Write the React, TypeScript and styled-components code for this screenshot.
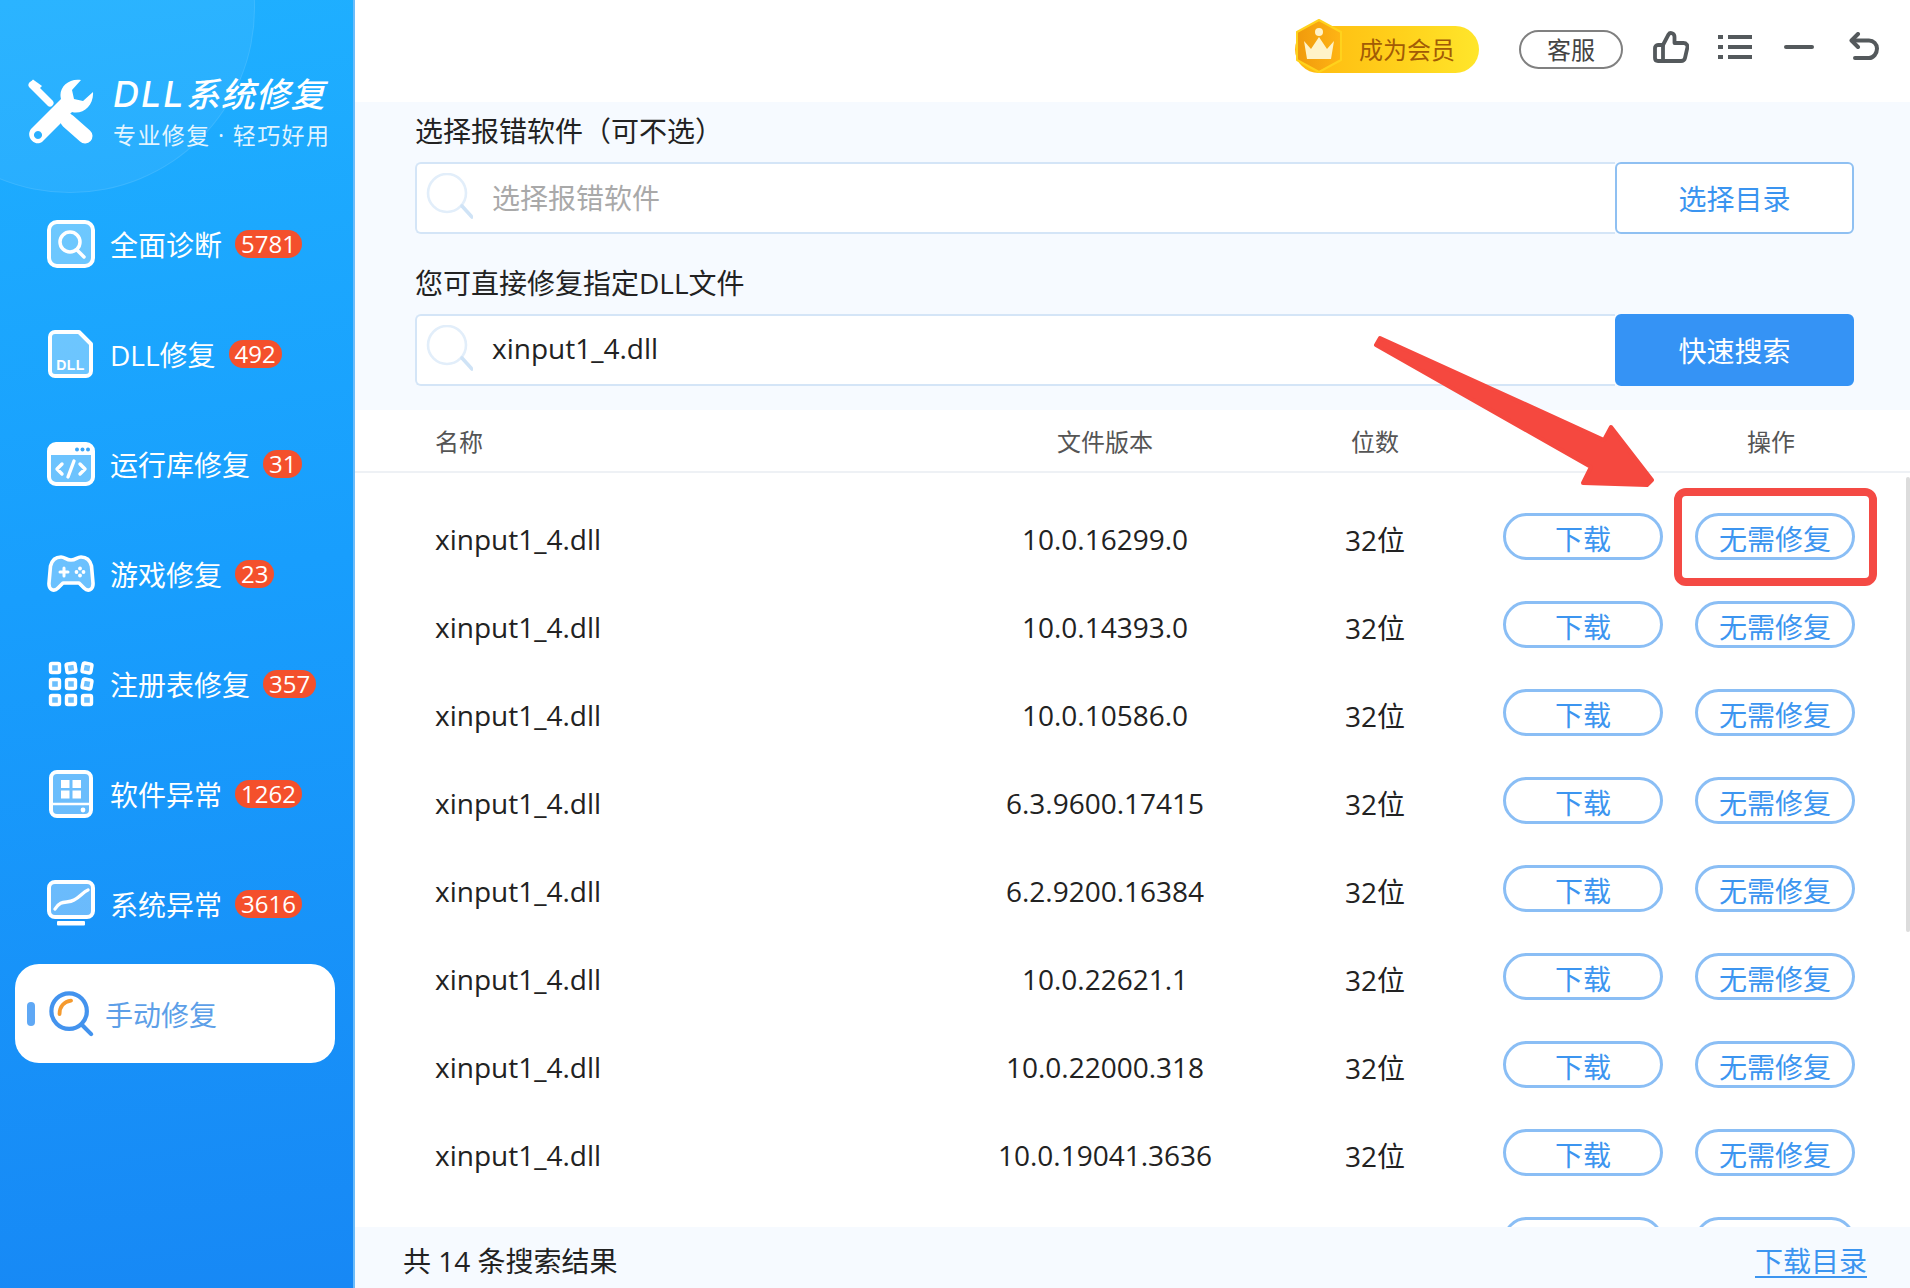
import React from "react";
import styled, { createGlobalStyle } from "styled-components";

const FONT = `"Open Sans", "Noto Sans CJK SC", sans-serif`;

const Global = createGlobalStyle`
  html, body { margin: 0; padding: 0; background: #fff; }
  body { font-family: ${FONT}; }
  * { box-sizing: border-box; }
`;

const App_ = styled.div`
  position: relative;
  display: flex;
  width: 1910px;
  height: 1288px;
  overflow: hidden;
  background: #fff;
`;

/* ---------- sidebar ---------- */
const Sidebar = styled.aside`
  position: relative;
  flex: 0 0 355px;
  display: flex;
  flex-direction: column;
  overflow: hidden;
  background: linear-gradient(172deg, #1fb0ff 0%, #189efd 45%, #1788f5 100%);
  border-right: 2px solid #6cbcfa;
`;
const Halo = styled.div`
  position: absolute;
  left: -115px;
  top: -177px;
  width: 370px;
  height: 370px;
  border-radius: 50%;
  background: rgba(255, 255, 255, 0.055);
  border: 1px solid rgba(255, 255, 255, 0.09);
`;
const Brand = styled.div`
  position: relative;
  height: 194px;
  padding: 75px 0 0 28px;
  display: flex;
  align-items: flex-start;
  gap: 19px;
  color: #fff;
`;
const BrandText = styled.div`
  display: flex;
  flex-direction: column;
`;
const BrandTitle = styled.div`
  font-family: "Inter", "Noto Sans CJK SC", sans-serif;
  font-size: 34px;
  line-height: 38px;
  font-style: italic;
  font-weight: 500;
  letter-spacing: 1px;
  white-space: nowrap;
`;
const BrandLatin = styled.span`
  font-size: 36px;
  letter-spacing: 2px;
`;
const BrandSub = styled.div`
  margin-top: 7px;
  font-size: 23px;
  line-height: 28px;
  letter-spacing: 1.4px;
  color: rgba(255, 255, 255, 0.88);
  white-space: nowrap;
`;
const Nav = styled.nav`
  position: relative;
  display: flex;
  flex-direction: column;
  gap: 10px;
  width: 320px;
  margin-left: 15px;
`;
const NavItem = styled.div<{ $active?: boolean }>`
  height: ${(p) => (p.$active ? "99px" : "100px")};
  display: flex;
  align-items: center;
  padding-left: ${(p) => (p.$active ? "12px" : "32px")};
  gap: ${(p) => (p.$active ? "14px" : "15px")};
  border-radius: 24px;
  background: ${(p) => (p.$active ? "#fff" : "transparent")};
`;
const ActiveBar = styled.span`
  width: 8px;
  height: 24px;
  border-radius: 4px;
  background: #5fa8f5;
`;
const NavIcon = styled.svg`
  flex: 0 0 48px;
  width: 48px;
  height: 48px;
`;
const NavLabel = styled.span<{ $active?: boolean }>`
  padding-top: 2px;
  font-size: 28px;
  line-height: 36px;
  color: ${(p) => (p.$active ? "#5d9fe8" : "#fff")};
  margin-left: ${(p) => (p.$active ? "-4px" : "0")};
  white-space: nowrap;
`;
const Badge = styled.span`
  margin-left: -2px;
  height: 28px;
  padding: 0 6px;
  display: flex;
  align-items: center;
  border-radius: 14px;
  background: #f4502c;
  color: #fff;
  font-size: 24px;
  line-height: 28px;
`;

/* ---------- main ---------- */
const Main = styled.main`
  flex: 1;
  min-width: 0;
  display: flex;
  flex-direction: column;
`;
const TopBar = styled.header`
  flex: 0 0 102px;
  display: flex;
  align-items: flex-start;
  padding: 20px 0 0 940px;
`;
const Vip = styled.div`
  position: relative;
  margin-top: 6px;
  width: 184px;
  height: 47px;
  padding-left: 64px;
  padding-bottom: 3px;
  border-radius: 24px;
  background: linear-gradient(90deg, #ffb80f 0%, #ffd21c 60%, #ffe62b 100%);
  display: flex;
  align-items: center;
  font-size: 24px;
  color: #a25b06;
  white-space: nowrap;
`;
const VipMark = styled.svg`
  position: absolute;
  left: 0;
  top: -7px;
  width: 48px;
  height: 54px;
`;
const Service = styled.div`
  margin: 10px 0 0 40px;
  width: 104px;
  height: 39px;
  padding-bottom: 2px;
  border: 2px solid #808080;
  border-radius: 20px;
  display: flex;
  align-items: center;
  justify-content: center;
  font-size: 24px;
  color: #444;
`;
const TopTool = styled.div<{ $w: number; $ml: number }>`
  margin: 5px 0 0 ${(p) => p.$ml}px;
  width: ${(p) => p.$w}px;
  height: 44px;
  display: flex;
  align-items: center;
  justify-content: center;
  color: #54595c;
`;
const ThumbIcon = styled.svg`
  width: 36px;
  height: 32px;
`;
const ListIcon = styled.svg`
  width: 34px;
  height: 26px;
`;
const UndoIcon = styled.svg`
  width: 30px;
  height: 28px;
  margin-top: -3px;
`;
const Dash = styled.span`
  width: 30px;
  height: 4px;
  border-radius: 2px;
  background: #54595c;
`;

const SearchPanel = styled.section`
  flex: 0 0 308px;
  background: #f6faff;
  padding: 10px 56px 0 60px;
  display: flex;
  flex-direction: column;
  gap: 12px;
`;
const FieldLabel = styled.div`
  height: 38px;
  font-size: 28px;
  line-height: 38px;
  color: #222;
  white-space: nowrap;
`;
const FieldRow = styled.div`
  height: 72px;
  display: flex;
  & + div {
    margin-top: 18px;
  }
`;
const Input = styled.div`
  flex: 1;
  display: flex;
  align-items: center;
  padding-left: 8px;
  gap: 19px;
  background: #fff;
  border: 2px solid #d4e5f7;
  border-right: 0;
  border-radius: 6px 0 0 6px;
`;
const InputIcon = styled.svg`
  flex: 0 0 48px;
  width: 48px;
  height: 48px;
  margin-top: -3px;
`;
const InputText = styled.span<{ $placeholder?: boolean }>`
  padding-bottom: ${(p) => (p.$placeholder ? "3px" : "5px")};
  font-size: 28px;
  color: ${(p) => (p.$placeholder ? "#a9a9a9" : "#222")};
  white-space: nowrap;
`;
const FieldButton = styled.div<{ $solid?: boolean }>`
  flex: 0 0 239px;
  display: flex;
  align-items: center;
  justify-content: center;
  font-size: 28px;
  border-radius: 6px;
  border: 2px solid ${(p) => (p.$solid ? "#3593f5" : "#8fc0f2")};
  background: ${(p) => (p.$solid ? "#3593f5" : "#fff")};
  color: ${(p) => (p.$solid ? "#fff" : "#3a94f0")};
`;

const Table = styled.section`
  position: relative;
  flex: 1;
  min-height: 0;
  display: flex;
  flex-direction: column;
`;
const HeadRow = styled.div`
  flex: 0 0 63px;
  display: grid;
  grid-template-columns: 520px 300px 240px 1fr;
  align-items: center;
  padding-left: 80px;
  border-bottom: 2px solid #eef1f5;
  font-size: 24px;
  color: #555;
`;
const HeadCell = styled.div<{ $align?: string; $pr?: number }>`
  text-align: ${(p) => p.$align ?? "left"};
  padding-right: ${(p) => p.$pr ?? 0}px;
`;
const Rows = styled.div`
  flex: 1;
  min-height: 0;
  overflow: hidden;
  padding-top: 19px;
`;
const Row = styled.div`
  height: 88px;
  display: grid;
  grid-template-columns: 520px 300px 240px 1fr;
  align-items: center;
  padding-left: 80px;
  font-size: 28px;
  color: #222;
`;
const Cell = styled.div<{ $center?: boolean }>`
  text-align: ${(p) => (p.$center ? "center" : "left")};
  padding-top: 6px;
  white-space: nowrap;
`;
const Ops = styled.div`
  display: flex;
  gap: 32px;
  padding-left: 8px;
`;
const OpButton = styled.div`
  width: 160px;
  height: 47px;
  border: 3px solid #8abef5;
  border-radius: 24px;
  display: flex;
  align-items: center;
  justify-content: center;
  padding-top: 3px;
  color: #3c95f0;
  font-size: 28px;
  background: #fff;
`;
const Scrollbar = styled.div`
  position: absolute;
  right: 0;
  top: 67px;
  width: 4px;
  height: 455px;
  border-radius: 2px;
  background: #dcdcdc;
`;
const Footer = styled.footer`
  flex: 0 0 61px;
  background: #f6faff;
  display: flex;
  align-items: center;
  justify-content: space-between;
  padding: 4px 43px 0 48px;
  font-size: 28px;
  color: #222;
`;
const FooterLink = styled.a`
  color: #3c95f0;
  text-decoration: underline;
  text-underline-offset: 4px;
`;

/* ---------- annotations over the screenshot ---------- */
const ArrowMark = styled.svg`
  position: absolute;
  left: 1360px;
  top: 325px;
  width: 310px;
  height: 175px;
  pointer-events: none;
`;
const Highlight = styled.div`
  position: absolute;
  left: 1674px;
  top: 488px;
  width: 203px;
  height: 98px;
  border: 8px solid #f44a44;
  border-radius: 12px;
  pointer-events: none;
`;

/* ---------- icons ---------- */
const Logo = () => (
  <svg width="66" height="66" viewBox="0 0 66 66" style={{ marginTop: 4, flex: "0 0 66px" }}>
    <path
      fillRule="evenodd"
      fill="#fff"
      d="M3 50 L33 20 C30 9 40 -1 53 1 L44 11 L46 20 L55 22 L65 13 C66 26 55 36 44 33 L14 63 C7 68 -3 58 3 50 Z M10 52 a4 4 0 1 0 .01 0 Z"
    />
    <path d="M4 6 L22 24" stroke="#fff" strokeWidth="7" strokeLinecap="round" fill="none" />
    <path d="M1.5 4 L5 0.5 L14 7 L8 13 Z" fill="#fff" />
    <path d="M40 42 L57 57" stroke="#fff" strokeWidth="15" strokeLinecap="round" fill="none" />
  </svg>
);

const SOFT = "rgba(255,255,255,0.36)";

const IconDiag = () => (
  <NavIcon viewBox="0 0 48 48">
    <rect x="2" y="2" width="44" height="44" rx="8" fill={SOFT} stroke="#fff" strokeWidth="4" />
    <circle cx="23" cy="22" r="10" fill="none" stroke="#fff" strokeWidth="3.5" />
    <path d="M30 30 L37 37" stroke="#fff" strokeWidth="3.5" strokeLinecap="round" />
  </NavIcon>
);
const IconDll = () => (
  <NavIcon viewBox="0 0 48 48">
    <path d="M8 2 H32 L44 14 V41 a5 5 0 0 1 -5 5 H8 a5 5 0 0 1 -5 -5 V7 a5 5 0 0 1 5 -5 Z" fill={SOFT} stroke="#fff" strokeWidth="4" strokeLinejoin="round" />
    <text x="23.5" y="40" textAnchor="middle" fontFamily="'Liberation Sans', sans-serif" fontWeight="700" fontSize="14" letterSpacing="0.4" fill="#fff">DLL</text>
  </NavIcon>
);
const IconRuntime = () => (
  <NavIcon viewBox="0 0 48 48">
    <rect x="2" y="4" width="44" height="40" rx="7" fill={SOFT} stroke="#fff" strokeWidth="4" />
    <path d="M2 15 V10 a6 6 0 0 1 6 -6 H40 a6 6 0 0 1 6 6 V15 Z" fill="#fff" />
    <circle cx="30" cy="9.5" r="2" fill="#3aa6f8" /><circle cx="35.5" cy="9.5" r="2" fill="#3aa6f8" /><circle cx="41" cy="9.5" r="2" fill="#3aa6f8" />
    <path d="M15 24 L10 29 L15 34 M33 24 L38 29 L33 34 M27 21 L21 37" fill="none" stroke="#fff" strokeWidth="3.4" strokeLinecap="round" strokeLinejoin="round" />
  </NavIcon>
);
const IconGame = () => (
  <NavIcon viewBox="0 0 48 48">
    <path d="M14 7 C8 7 5 10 3.5 16 L2 33 C1.5 40 7 42 11 38 L16 33 H32 L37 38 C41 42 46.5 40 46 33 L44.5 16 C43 10 40 7 34 7 C30 7 29 10 24 10 C19 10 18 7 14 7 Z" fill={SOFT} stroke="#fff" strokeWidth="3.6" strokeLinejoin="round" />
    <path d="M13 22 H21 M17 18 V26" stroke="#fff" strokeWidth="3" strokeLinecap="round" />
    <circle cx="33" cy="18.5" r="1.9" fill="#fff" /><circle cx="33" cy="25.5" r="1.9" fill="#fff" /><circle cx="29.5" cy="22" r="1.9" fill="#fff" /><circle cx="36.5" cy="22" r="1.9" fill="#fff" />
  </NavIcon>
);
const GRID_CELLS: [number, number, number][] = [
  [8, 8, 0], [24, 8, -8], [40, 8, 10],
  [8, 24, 0], [24, 24, 0], [40, 24, 10],
  [8, 40, 0], [24, 40, 0], [40, 40, 0],
];
const IconGrid = () => (
  <NavIcon viewBox="0 0 48 48">
    {GRID_CELLS.map(([x, y, r]) => (
      <rect key={`${x}-${y}`} x={x - 4.5} y={y - 4.5} width="9" height="9" rx="1.5" fill={SOFT} stroke="#fff" strokeWidth="3.4" transform={`rotate(${r} ${x} ${y})`} />
    ))}
  </NavIcon>
);
const IconSoft = () => (
  <NavIcon viewBox="0 0 48 48">
    <rect x="4" y="2" width="40" height="44" rx="6" fill={SOFT} stroke="#fff" strokeWidth="4" />
    <path d="M5 34 H43" stroke="#fff" strokeWidth="2.5" />
    <circle cx="36" cy="40" r="2.4" fill="#fff" />
    <path d="M14 10 H22.5 V18 H14 Z M25.5 10 H34 V18 H25.5 Z M14 20.5 H22.5 V28.5 H14 Z M25.5 20.5 H34 V28.5 H25.5 Z" fill="#fff" />
  </NavIcon>
);
const IconSys = () => (
  <NavIcon viewBox="0 0 48 48">
    <rect x="2" y="2" width="44" height="35" rx="6" fill={SOFT} stroke="#fff" strokeWidth="4" />
    <path d="M8 29 C14 19 20 24 27 20 C33 17 36 12 41 10" fill="none" stroke="#fff" strokeWidth="3.4" strokeLinecap="round" />
    <rect x="10" y="41" width="28" height="4.5" rx="1" fill="#fff" />
  </NavIcon>
);
const IconManual = () => (
  <NavIcon viewBox="0 0 48 48" style={{ flex: "0 0 46px", width: 46, height: 48 }}>
    <circle cx="21" cy="21" r="18.5" fill="none" stroke="#4393ee" strokeWidth="4.4" />
    <path d="M34 35 L44 45" stroke="#4393ee" strokeWidth="4.4" strokeLinecap="round" />
    <path d="M11 24 C11 16 16 11 23 10" fill="none" stroke="#f59a2e" strokeWidth="4" strokeLinecap="round" />
  </NavIcon>
);
const InputGlass = () => (
  <InputIcon viewBox="0 0 48 48">
    <circle cx="22" cy="20" r="19" fill="#fff" stroke="#e2eefa" strokeWidth="2.6" />
    <path d="M37 33 L47 44" stroke="#cfe3f6" strokeWidth="3.6" strokeLinecap="round" />
  </InputIcon>
);

const NAV = [
  { label: "全面诊断", badge: "5781", icon: <IconDiag /> },
  { label: "DLL修复", badge: "492", icon: <IconDll /> },
  { label: "运行库修复", badge: "31", icon: <IconRuntime /> },
  { label: "游戏修复", badge: "23", icon: <IconGame /> },
  { label: "注册表修复", badge: "357", icon: <IconGrid /> },
  { label: "软件异常", badge: "1262", icon: <IconSoft /> },
  { label: "系统异常", badge: "3616", icon: <IconSys /> },
];

const VERSIONS = [
  "10.0.16299.0",
  "10.0.14393.0",
  "10.0.10586.0",
  "6.3.9600.17415",
  "6.2.9200.16384",
  "10.0.22621.1",
  "10.0.22000.318",
  "10.0.19041.3636",
];

export default function App() {
  return (
    <App_>
      <Global />
      <Sidebar>
        <Halo />
        <Brand>
          <Logo />
          <BrandText>
            <BrandTitle><BrandLatin>DLL</BrandLatin>系统修复</BrandTitle>
            <BrandSub>专业修复 · 轻巧好用</BrandSub>
          </BrandText>
        </Brand>
        <Nav>
          {NAV.map((n) => (
            <NavItem key={n.label}>
              {n.icon}
              <NavLabel>{n.label}</NavLabel>
              <Badge>{n.badge}</Badge>
            </NavItem>
          ))}
          <NavItem $active>
            <ActiveBar />
            <IconManual />
            <NavLabel $active>手动修复</NavLabel>
          </NavItem>
        </Nav>
      </Sidebar>

      <Main>
        <TopBar>
          <Vip>
            <VipMark viewBox="0 0 48 54">
              <defs>
                <linearGradient id="hex" x1="0" y1="0" x2="1" y2="0">
                  <stop offset="0" stopColor="#f09a0c" />
                  <stop offset="1" stopColor="#ffb414" />
                </linearGradient>
              </defs>
              <path d="M24 1 L46 13 V41 L24 53 L2 41 V13 Z" fill="url(#hex)" stroke="#ffd21c" strokeWidth="2" strokeLinejoin="round" />
              <path d="M9 22 L16 30 L24 18 L32 30 L39 22 L36 40 H12 Z" fill="#fff3c8" strokeLinejoin="round" />
              <circle cx="24" cy="13" r="4" fill="#fff3c8" />
            </VipMark>
            成为会员
          </Vip>
          <Service>客服</Service>
          <TopTool $w={36} $ml={30}>
            <ThumbIcon viewBox="0 0 36 32" fill="none" stroke="#54595c" strokeWidth="3.8" strokeLinejoin="round" strokeLinecap="round">
              <path d="M10 14 L15.5 3.5 C17 1 21.5 1.8 21.5 6 V12 H30.5 C33.5 12 35 14.5 34.3 17 L32 27 C31.5 29 30 30 28 30 H10 Z" />
              <path d="M10 14 H5 C3 14 2 15.5 2 17 V27 C2 29 3 30 5 30 H10" />
            </ThumbIcon>
          </TopTool>
          <TopTool $w={34} $ml={29}>
            <ListIcon viewBox="0 0 34 26">
              <path d="M10 3 H34 M10 13 H34 M10 23 H34" stroke="#54595c" strokeWidth="3.8" />
              <path d="M0 3 H5 M0 13 H5 M0 23 H5" stroke="#54595c" strokeWidth="3.8" />
            </ListIcon>
          </TopTool>
          <TopTool $w={30} $ml={32}>
            <Dash />
          </TopTool>
          <TopTool $w={30} $ml={35}>
            <UndoIcon viewBox="0 0 30 28" fill="none" stroke="#54595c" strokeWidth="4" strokeLinejoin="round" strokeLinecap="round">
              <path d="M9 2 L2.5 8.5 L9 15" />
              <path d="M3 8.5 H20 C24.5 8.5 28 12 28 16.5 C28 21.5 24.5 26 20 26 H6" />
            </UndoIcon>
          </TopTool>
        </TopBar>

        <SearchPanel>
          <FieldLabel>选择报错软件（可不选）</FieldLabel>
          <FieldRow>
            <Input>
              <InputGlass />
              <InputText $placeholder>选择报错软件</InputText>
            </Input>
            <FieldButton>选择目录</FieldButton>
          </FieldRow>
          <FieldLabel>您可直接修复指定DLL文件</FieldLabel>
          <FieldRow>
            <Input>
              <InputGlass />
              <InputText>xinput1_4.dll</InputText>
            </Input>
            <FieldButton $solid>快速搜索</FieldButton>
          </FieldRow>
        </SearchPanel>

        <Table>
          <HeadRow>
            <HeadCell>名称</HeadCell>
            <HeadCell $align="center">文件版本</HeadCell>
            <HeadCell $align="center">位数</HeadCell>
            <HeadCell $align="right" $pr={115}>操作</HeadCell>
          </HeadRow>
          <Rows>
            {VERSIONS.map((v) => (
              <Row key={v}>
                <Cell>xinput1_4.dll</Cell>
                <Cell $center>{v}</Cell>
                <Cell $center>32位</Cell>
                <Ops>
                  <OpButton>下载</OpButton>
                  <OpButton>无需修复</OpButton>
                </Ops>
              </Row>
            ))}
            <Row>
              <Cell />
              <Cell />
              <Cell />
              <Ops>
                <OpButton />
                <OpButton />
              </Ops>
            </Row>
          </Rows>
          <Scrollbar />
        </Table>

        <Footer>
          <span>共 14 条搜索结果</span>
          <FooterLink>下载目录</FooterLink>
        </Footer>
      </Main>

      <ArrowMark viewBox="0 0 310 175">
        <path
          d="M20 13 L244 115 L251 102 L292 155 L287 160 L223 158 L231 142 L16 20 Z"
          fill="#f5483f"
          stroke="#f5483f"
          strokeWidth="4"
          strokeLinejoin="round"
        />
      </ArrowMark>
      <Highlight />
    </App_>
  );
}
